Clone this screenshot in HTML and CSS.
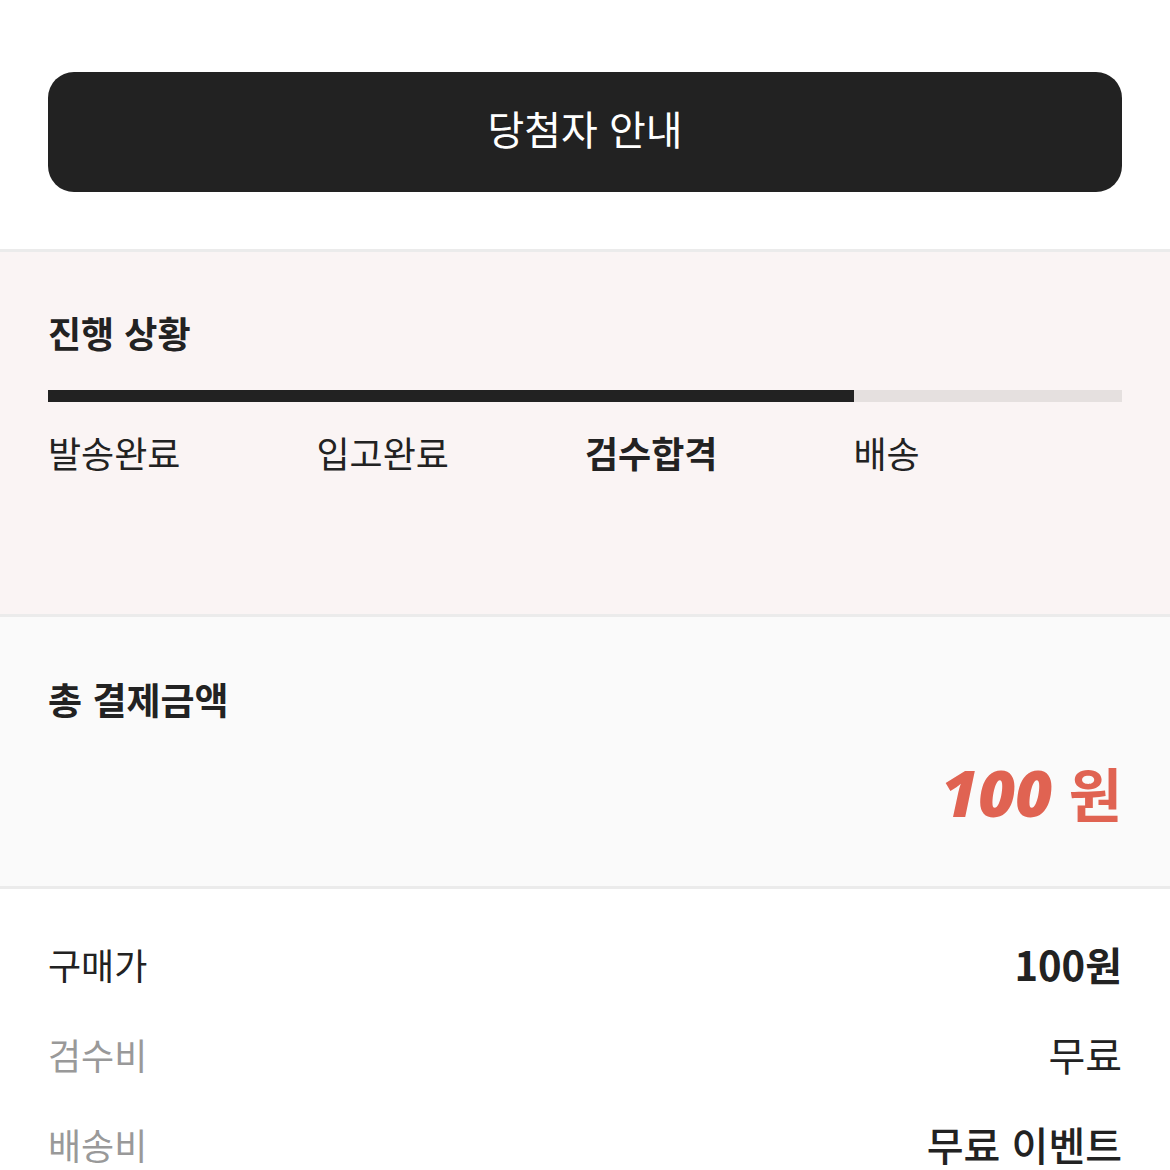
FILE: index.html
```html
<!DOCTYPE html>
<html lang="ko">
<head>
    <meta charset="UTF-8">
    <meta name="viewport" content="width=device-width, initial-scale=1.0">
    <title>주문 상세</title>
    <link rel="stylesheet" href="styles.css">
</head>
<body>
    <div class="top">
        <button class="winner-btn">당첨자 안내</button>
    </div>

    <section class="progress-section">
        <h2 class="section-title">진행 상황</h2>
        <div class="progress-bar">
            <div class="progress-fill" style="width: 75%"></div>
        </div>
        <ul class="steps">
            <li class="step">발송완료</li>
            <li class="step">입고완료</li>
            <li class="step active">검수합격</li>
            <li class="step">배송</li>
        </ul>
    </section>

    <section class="total-section">
        <h2 class="section-title wide">총 결제금액</h2>
        <div class="total-price"><span class="total-num">100</span> 원</div>
    </section>

    <section class="detail-section">
        <div class="detail-row">
            <span class="detail-label main">구매가</span>
            <span class="detail-value bold">100원</span>
        </div>
        <div class="detail-row">
            <span class="detail-label">검수비</span>
            <span class="detail-value">무료</span>
        </div>
        <div class="detail-row">
            <span class="detail-label">배송비</span>
            <span class="detail-value medium">무료 이벤트</span>
        </div>
    </section>
</body>
</html>
```

FILE: styles.css
```css
body {
    margin: 0;
    font-family: "Noto Sans CJK KR", "Noto Sans", sans-serif;
    color: #222;
    background: white;
}
.top {
    padding: 72px 48px 57px;
}
.winner-btn {
    display: block;
    width: 100%;
    height: 120px;
    padding: 0 0 8px;
    border: none;
    border-radius: 26px;
    background: #222;
    color: white;
    font-family: inherit;
    font-size: 40px;
    cursor: pointer;
}
.section-title {
    margin: 0;
    font-size: 36px;
    font-weight: bold;
    line-height: 1;
}
.section-title.wide {
    font-size: 37px;
}
.progress-section {
    background: #faf4f4;
    border-top: 3px solid #ebebeb;
    padding: 62px 48px 144px;
}
.progress-bar {
    margin-top: 40px;
    height: 12px;
    background: #e5e0df;
}
.progress-fill {
    height: 100%;
    background: #222;
}
.steps {
    list-style: none;
    margin: 32px 0 0;
    padding: 0;
    display: grid;
    grid-template-columns: repeat(4, 1fr);
}
.step {
    font-size: 36px;
    line-height: 1;
}
.step.active {
    font-weight: bold;
}
.total-section {
    background: #fafafa;
    border-top: 3px solid #ebebeb;
    padding: 64px 48px 64px;
}
.total-price {
    margin-top: 45px;
    text-align: right;
    color: #e06352;
    font-size: 58px;
    font-weight: bold;
    line-height: 58px;
}
.total-num {
    font-family: "Open Sans", sans-serif;
    font-size: 64px;
    font-style: italic;
    font-weight: 800;
}
.detail-section {
    border-top: 3px solid #ebebeb;
    padding: 30px 48px 0;
}
.detail-row {
    display: flex;
    justify-content: space-between;
    align-items: center;
    height: 90px;
    font-size: 36px;
}
.detail-label {
    color: #999;
}
.detail-label.main {
    color: #222;
}
.detail-value {
    font-size: 40px;
}
.detail-value.bold {
    font-weight: bold;
}
.detail-value.medium {
    font-weight: 500;
}
```
